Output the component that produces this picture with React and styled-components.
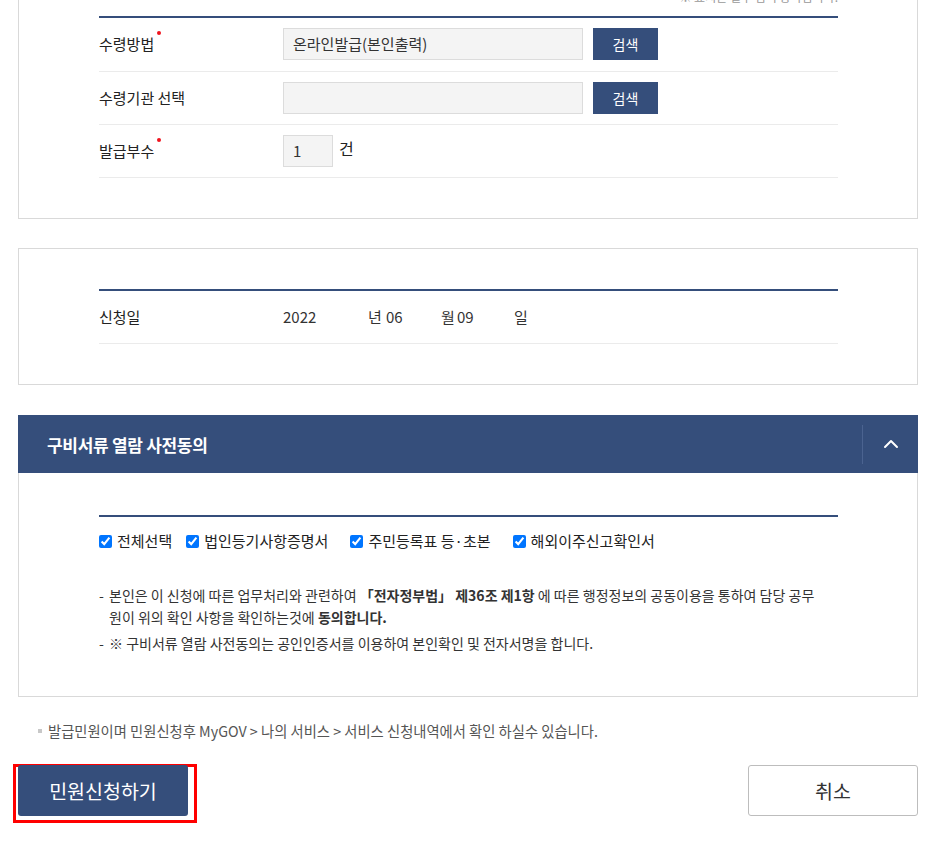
import React from "react";
import styled, { createGlobalStyle } from "styled-components";
import { FiChevronUp } from "react-icons/fi";

const NAVY = "#354e7b";

const GlobalStyle = createGlobalStyle`
  html, body {
    margin: 0;
    padding: 0;
    background: #fff;
    overflow: hidden;
  }
  body {
    font-family: "Noto Sans CJK KR", "Noto Sans", sans-serif;
    color: #222;
  }
`;

const Page = styled.div`
  width: 900px;
  margin: -23px 0 0 18px;
`;

const Panel = styled.section`
  box-sizing: border-box;
  width: 900px;
  border: 1px solid #d9d9d9;
  padding: ${(p) => p.$pad || "40px 79px 40px 80px"};
  margin-top: ${(p) => p.$mt || "0"};
`;

const TopNote = styled.div`
  text-align: right;
  font-size: 12px;
  line-height: 18px;
  color: #999;
  margin-bottom: 10px;
`;

const Table = styled.div`
  border-top: 2px solid ${NAVY};
`;

const Row = styled.div`
  display: flex;
  align-items: center;
  padding: 10px 0 ${(p) => p.$pb || "10px"};
  border-bottom: 1px solid #ebebeb;
  min-height: 32px;
`;

const Label = styled.div`
  width: 184px;
  flex: none;
  font-size: 15px;
  line-height: 20px;
  color: #222;
`;

const Req = styled.span`
  display: inline-block;
  width: 4px;
  height: 4px;
  border-radius: 50%;
  background: #f0141e;
  vertical-align: top;
  margin: -3px 0 0 3px;
`;

const Field = styled.div`
  box-sizing: border-box;
  width: ${(p) => p.$w || "300px"};
  height: 32px;
  background: #f4f4f4;
  border: 1px solid #dcdcdc;
  padding-left: 9px;
  font-size: 15px;
  line-height: 30px;
  color: #333;
`;

const SearchBtn = styled.button`
  width: 65px;
  height: 32px;
  margin-left: 10px;
  border: 0;
  background: ${NAVY};
  color: #fff;
  font-family: inherit;
  font-size: 14px;
  padding: 0;
`;

const Unit = styled.span`
  font-size: 16px;
  line-height: 20px;
  margin: -6px 0 0 6px;
`;

const DateCell = styled.span`
  display: inline-block;
  width: ${(p) => p.$w};
  font-size: 15px;
  line-height: 20px;
  color: #333;
`;

const AccHeader = styled.div`
  display: flex;
  align-items: center;
  height: 58px;
  margin-top: 30px;
  background: ${NAVY};
  color: #fff;
`;

const AccTitle = styled.h3`
  flex: 1;
  margin: 0;
  padding-left: 29px;
  font-size: 17px;
  font-weight: 700;
  letter-spacing: -0.3px;
`;

const AccToggle = styled.div`
  width: 55px;
  height: 39px;
  border-left: 1px solid #4b6390;
  display: flex;
  align-items: center;
  justify-content: center;
  font-size: 24px;
`;

const AccBody = styled(Panel)`
  border-top: 0;
  padding: 42px 79px 42px 80px;
`;

const CheckRow = styled.div`
  display: flex;
  align-items: center;
  padding-top: 14px;
`;

const Check = styled.label`
  display: flex;
  align-items: center;
  margin-right: ${(p) => p.$mr || "22px"};
  font-size: 15px;
  line-height: 20px;
  color: #222;

  input {
    width: 13px;
    height: 13px;
    margin: 0 5px 0 0;
    accent-color: #0075ff;
  }
`;

const Notice = styled.ul`
  list-style: none;
  margin: 33px 0 0;
  padding: 0;
  font-size: 14px;
  line-height: 22px;
  color: #333;
  white-space: nowrap;
`;

const NoticeItem = styled.li`
  display: flex;
  margin-top: ${(p) => p.$mt || "0"};

  & > span:first-child {
    width: 10px;
    flex: none;
  }
`;

const FootNote = styled.p`
  display: flex;
  align-items: center;
  margin: 24px 0 0 20px;
  font-size: 14.3px;
  line-height: 20px;
  color: #555;

  &::before {
    content: "";
    width: 4px;
    height: 4px;
    background: #c8c8c8;
    margin-right: 6px;
  }
`;

const Actions = styled.div`
  display: flex;
  justify-content: space-between;
  align-items: flex-start;
  margin: 23px 0 0 -5px;
`;

const Highlight = styled.div`
  border: 3px solid #f00;
  padding: 0 6px 4px 2px;
`;

const Btn = styled.button`
  box-sizing: border-box;
  width: 170px;
  height: 51px;
  border-radius: 3px;
  font-family: inherit;
  font-size: 19.5px;
  padding: 0;
  border: ${(p) => (p.$primary ? "0" : "1px solid #bdbdbd")};
  background: ${(p) => (p.$primary ? NAVY : "#fff")};
  color: ${(p) => (p.$primary ? "#fff" : "#333")};
  margin-top: ${(p) => (p.$primary ? "-2px" : "1px")};
`;

export default function App() {
  return (
    <Page>
      <GlobalStyle />
      <Panel $pad="10px 79px 40px 80px">
        <TopNote>※ 표시는 필수 입력 항목입니다.</TopNote>
        <Table>
          <Row $pb="11px">
            <Label>수령방법<Req /></Label>
            <Field>온라인발급(본인출력)</Field>
            <SearchBtn>검색</SearchBtn>
          </Row>
          <Row>
            <Label>수령기관 선택</Label>
            <Field />
            <SearchBtn>검색</SearchBtn>
          </Row>
          <Row>
            <Label>발급부수<Req /></Label>
            <Field $w="50px">1</Field>
            <Unit>건</Unit>
          </Row>
        </Table>
      </Panel>

      <Panel $mt="29px">
        <Table>
          <Row>
            <Label>신청일</Label>
            <DateCell $w="85px">2022</DateCell>
            <DateCell $w="18px">년</DateCell>
            <DateCell $w="55px">06</DateCell>
            <DateCell $w="16px">월</DateCell>
            <DateCell $w="57px">09</DateCell>
            <DateCell $w="20px">일</DateCell>
          </Row>
        </Table>
      </Panel>

      <AccHeader>
        <AccTitle>구비서류 열람 사전동의</AccTitle>
        <AccToggle>
          <FiChevronUp />
        </AccToggle>
      </AccHeader>
      <AccBody>
        <Table>
          <CheckRow>
            <Check $mr="14px"><input type="checkbox" defaultChecked />전체선택</Check>
            <Check><input type="checkbox" defaultChecked />법인등기사항증명서</Check>
            <Check><input type="checkbox" defaultChecked />주민등록표 등·초본</Check>
            <Check><input type="checkbox" defaultChecked />해외이주신고확인서</Check>
          </CheckRow>
        </Table>
        <Notice>
          <NoticeItem>
            <span>-</span>
            <span>
              본인은 이 신청에 따른 업무처리와 관련하여 <b>「전자정부법」 제36조 제1항</b> 에 따른 행정정보의 공동이용을 통하여 담당 공무
              <br />
              원이 위의 확인 사항을 확인하는것에 <b>동의합니다.</b>
            </span>
          </NoticeItem>
          <NoticeItem $mt="4px">
            <span>-</span>
            <span>※ 구비서류 열람 사전동의는 공인인증서를 이용하여 본인확인 및 전자서명을 합니다.</span>
          </NoticeItem>
        </Notice>
      </AccBody>

      <FootNote>발급민원이며 민원신청후 MyGOV &gt; 나의 서비스 &gt; 서비스 신청내역에서 확인 하실수 있습니다.</FootNote>

      <Actions>
        <Highlight>
          <Btn $primary>민원신청하기</Btn>
        </Highlight>
        <Btn>취소</Btn>
      </Actions>
    </Page>
  );
}
